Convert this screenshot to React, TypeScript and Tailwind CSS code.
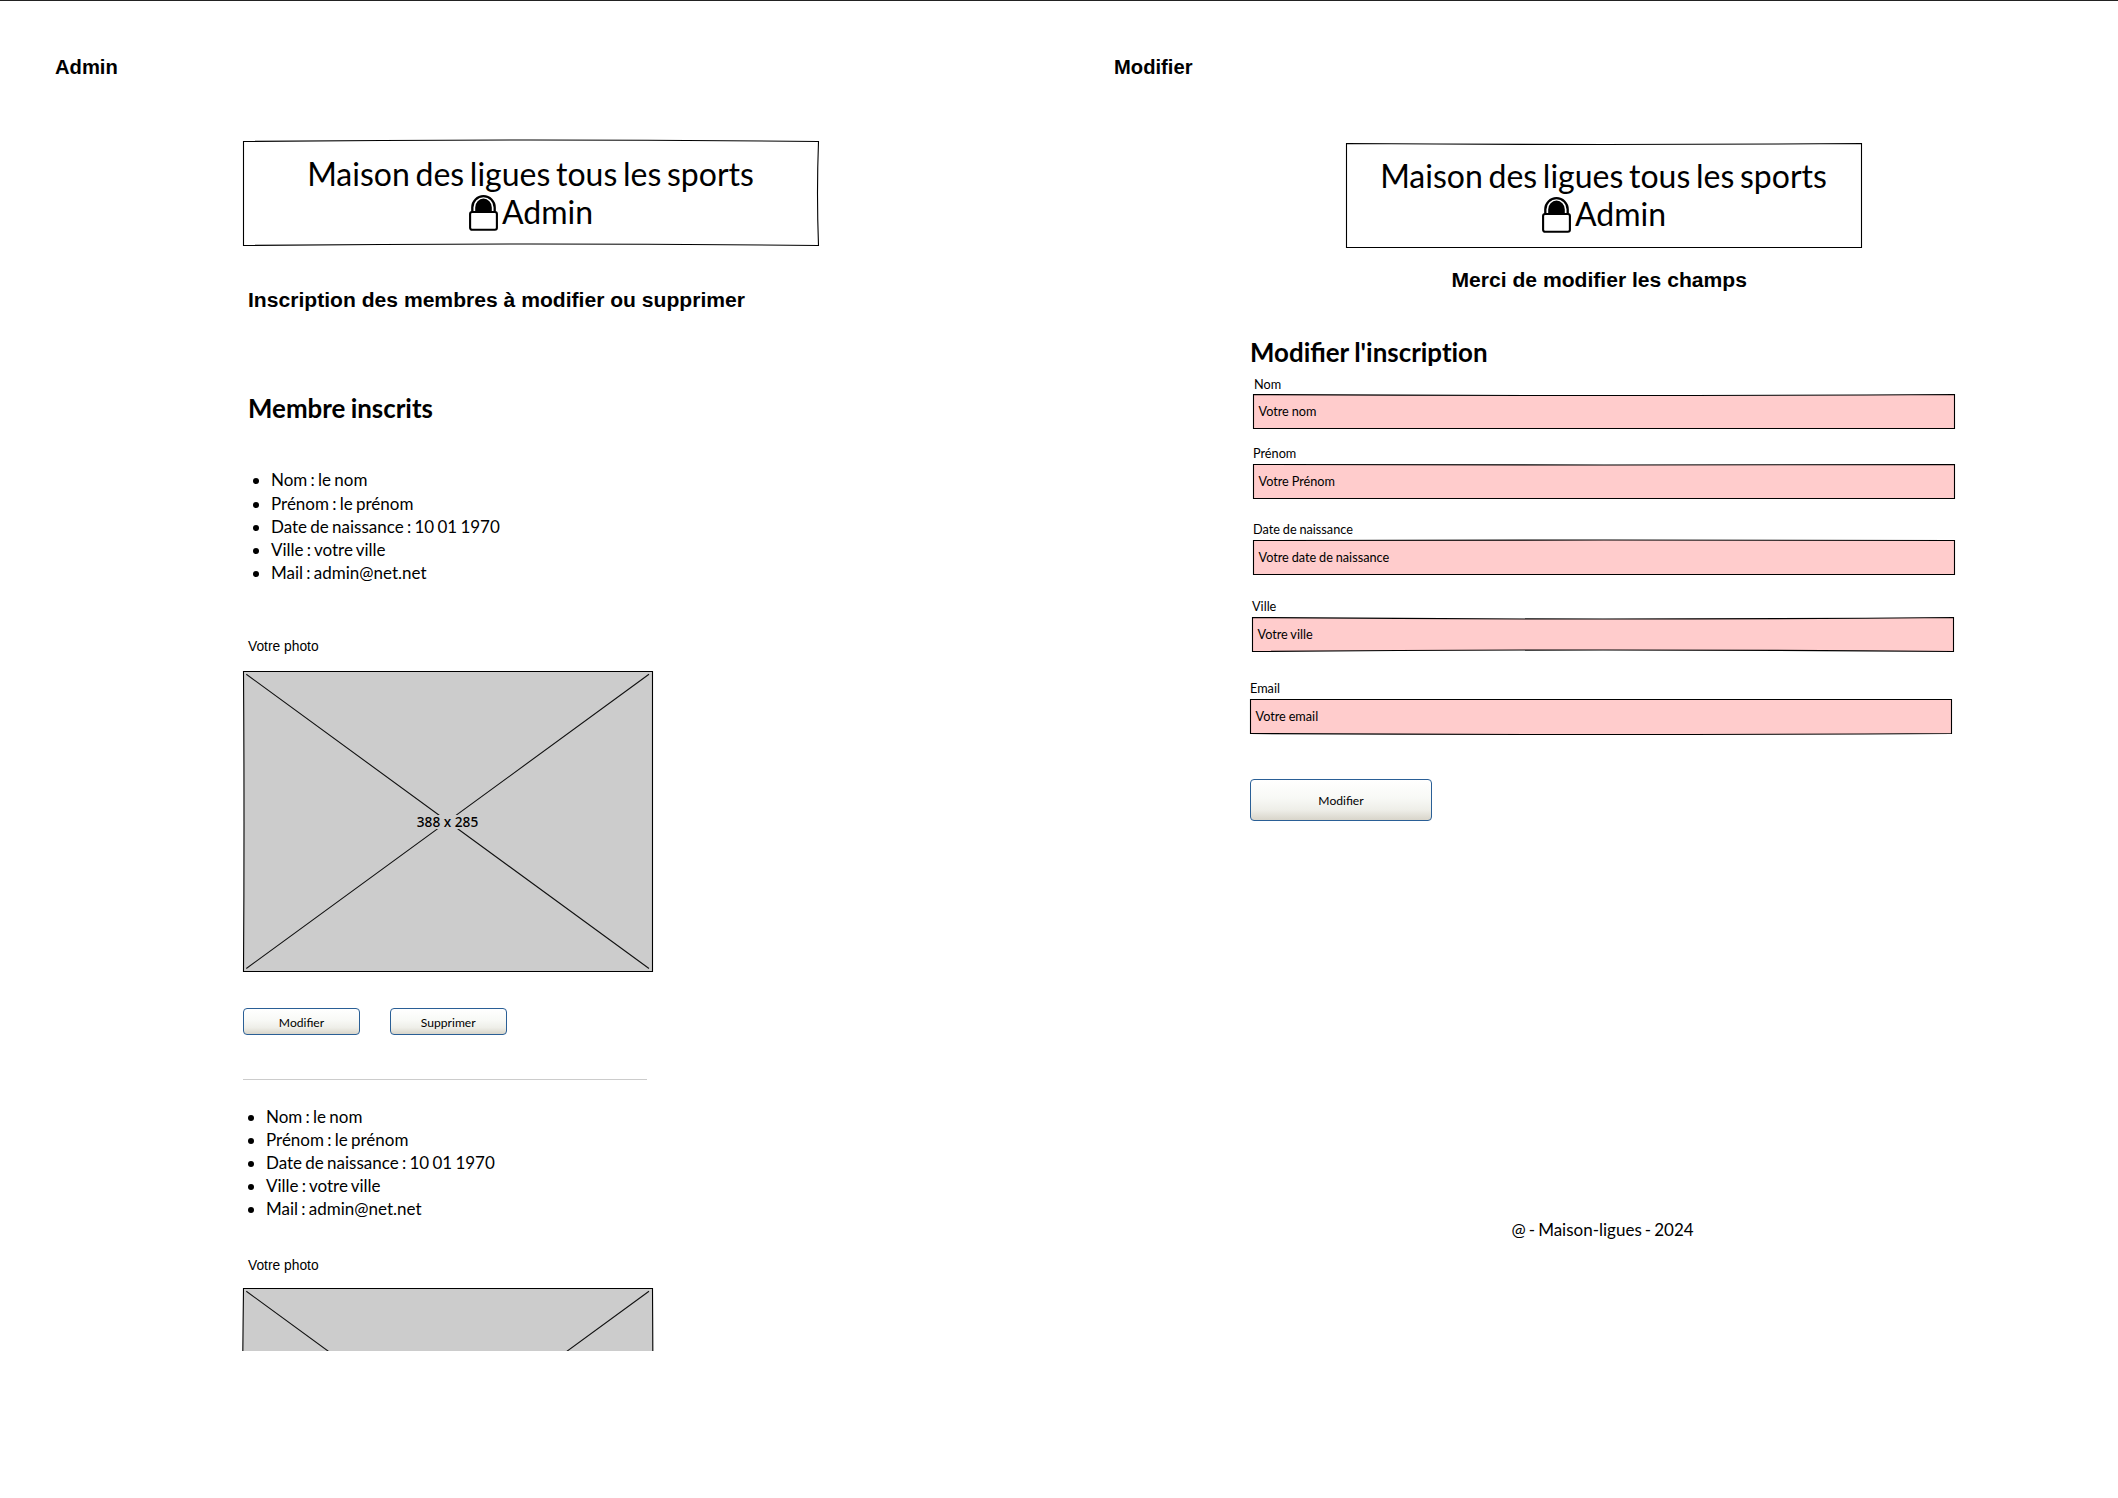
import type { ReactNode } from "react";

/* Rectangle whose edges bow slightly, as if drawn by hand.
   top / right / bottom / left give the bow of each edge in pixels. */
function SketchFrame({
  w,
  h,
  fill = "none",
  top = 0,
  right = 0,
  bottom = 0,
  left = 0,
}: {
  w: number;
  h: number;
  fill?: string;
  top?: number;
  right?: number;
  bottom?: number;
  left?: number;
}) {
  const d = `M.5 .5Q${w / 2} ${0.5 + top} ${w - 0.5} .5Q${w - 0.5 + right} ${h / 2} ${w - 0.5} ${h - 0.5}Q${w / 2} ${h - 0.5 + bottom} .5 ${h - 0.5}Q${0.5 + left} ${h / 2} .5 .5Z`;
  return (
    <svg className="absolute inset-0 overflow-visible" width={w} height={h} aria-hidden="true">
      <path d={d} fill={fill} stroke="#000" strokeWidth="1.1" />
    </svg>
  );
}

function Lock() {
  return (
    <svg className="h-[38px] w-[29px] shrink-0" viewBox="0 0 29 38" aria-hidden="true">
      <path d="M3.3 19V14.4a11.2 11.2 0 0 1 22.4 0V19" fill="none" stroke="#000" strokeWidth="2.3" />
      <path d="M6.2 19V14.4a8.3 8.8 0 0 1 16.6 0V19Z" fill="#000" />
      <rect x="1.1" y="19" width="26.8" height="17.8" rx="2" fill="#fff" stroke="#000" strokeWidth="2.1" />
    </svg>
  );
}

function Banner() {
  return (
    <div className="relative pt-[14px] text-center font-['Lato',sans-serif] text-[32px] leading-[38px] [word-spacing:-2.5px]">
      <div className="-ml-px whitespace-nowrap">Maison des ligues tous les sports</div>
      <div className="flex h-[38px] items-start justify-center gap-[4px]">
        <Lock />
        <span>Admin</span>
      </div>
    </div>
  );
}

function Details({ className }: { className: string }) {
  const rows = [
    "Nom : le nom",
    "Prénom : le prénom",
    "Date de naissance : 10 01 1970",
    "Ville : votre ville",
    "Mail : admin@net.net",
  ];
  return (
    <ul className={"font-['Lato',sans-serif] text-[17px] leading-[23px] [word-spacing:-1.1px] " + className}>
      {rows.map((row) => (
        <li key={row} className="flex items-center whitespace-nowrap">
          <span className="mt-[2px] mr-[12px] ml-[5px] size-[6px] rounded-full bg-black" />
          {row}
        </li>
      ))}
    </ul>
  );
}

function Photo({ className, size, bow }: { className: string; size?: string; bow: number }) {
  return (
    <div className={"relative flex h-[301px] w-[410px] items-center justify-center " + className}>
      <SketchFrame w={410} h={301} fill="#ccc" left={bow} right={bow < 0 ? 1 : 0} />
      <svg className="absolute inset-0" width="410" height="301" aria-hidden="true">
        <path d="M3.3 3.3L406 297.5M406 3.3L3.3 297.5" stroke="#111" strokeWidth="1.1" />
      </svg>
      {size && (
        <span className="relative -ml-px bg-[#ccc] font-['Noto_Sans',sans-serif] text-[13.7px] leading-[14px] font-medium whitespace-nowrap">
          {size}
        </span>
      )}
    </div>
  );
}

function Button({ children, className }: { children: ReactNode; className: string }) {
  return (
    <button
      type="button"
      className={
        "flex items-center justify-center rounded-[4px] border border-[#2a5f96] bg-[linear-gradient(to_bottom,#fff_0%,#f8f9f6_45%,#eeeee8_75%,#d8d5ca_100%)] pt-[2px] font-['Lato',sans-serif] text-[12.1px] leading-[16px] " +
        className
      }
    >
      {children}
    </button>
  );
}

type Bow = { top?: number; right?: number; bottom?: number; left?: number };

function Field({
  label,
  hint,
  className,
  labelClass,
  bow,
}: {
  label: string;
  hint: string;
  className: string;
  labelClass: string;
  bow: Bow;
}) {
  return (
    <label className={"flex w-[702px] flex-col font-['Lato',sans-serif] text-[12.7px] [word-spacing:-0.4px] " + className}>
      <span className={"leading-[16px] " + labelClass}>{label}</span>
      <span className="relative flex h-[35px] items-start pt-[9px]">
        <SketchFrame w={702} h={35} fill="#fcc" {...bow} />
        <span className="relative pl-[5.5px] leading-[16px]">{hint}</span>
      </span>
    </label>
  );
}

export default function App() {
  return (
    <div className="flex h-[1498px] w-[2118px] overflow-hidden border-t border-[#222] bg-white font-['Liberation_Sans',sans-serif] text-black">
      <section className="flex h-[1350px] w-[1059px] flex-col overflow-hidden [&>*]:shrink-0">
        <h1 className="mt-[54px] ml-[55px] text-[20.2px] leading-[24px] font-bold">Admin</h1>
        <header className="relative mt-[62px] ml-[243px] h-[105px] w-[576px]">
          <SketchFrame w={576} h={105} top={-3} bottom={-3} right={-2} />
          <Banner />
        </header>
        <h2 className="mt-[42px] ml-[248px] text-[21.1px] leading-[24px] font-bold whitespace-nowrap">
          Inscription des membres à modifier ou supprimer
        </h2>
        <h3 className="mt-[81px] ml-[248px] font-['Lato',sans-serif] text-[25.9px] leading-[30px] font-bold [word-spacing:-1px]">
          Membre inscrits
        </h3>
        <Details className="mt-[45px] ml-[248px] [&>li:first-child]:mb-px" />
        <p className="mt-[54px] ml-[248px] text-[13.8px] leading-[18px]">Votre photo</p>
        <Photo className="mt-[15px] ml-[243px]" size="388 x 285" bow={1} />
        <div className="mt-[36px] ml-[243px] flex gap-[29.5px]">
          <Button className="h-[27px] w-[117px]">Modifier</Button>
          <Button className="h-[27px] w-[117.5px]">Supprimer</Button>
        </div>
        <hr className="mt-[44px] ml-[243px] w-[404px] border-[#ccc]" />
        <Details className="mt-[25px] ml-[243px]" />
        <p className="mt-[37px] ml-[248px] text-[13.8px] leading-[18px]">Votre photo</p>
        <Photo className="mt-[13px] ml-[243px]" bow={-2} />
      </section>
      <section className="flex w-[1059px] flex-col [&>*]:shrink-0">
        <h1 className="mt-[54px] ml-[55px] text-[20.2px] leading-[24px] font-bold">Modifier</h1>
        <header className="relative mt-[64px] ml-[287px] h-[105px] w-[516px]">
          <SketchFrame w={516} h={105} top={2} />
          <Banner />
        </header>
        <h2 className="mt-[20px] ml-[392.5px] text-[21.1px] leading-[24px] font-bold whitespace-nowrap">
          Merci de modifier les champs
        </h2>
        <h3 className="mt-[45px] ml-[191px] font-['Lato',sans-serif] text-[25.9px] leading-[30px] font-bold [word-spacing:-0.8px]">
          Modifier <span className="[font-variant-ligatures:none]">l'inscription</span>
        </h3>
        <Field label="Nom" hint="Votre nom" className="mt-[9px] ml-[194px]" labelClass="mb-[2px] pl-[1px]" bow={{ top: 2 }} />
        <Field label="Prénom" hint="Votre Prénom" className="mt-[16px] ml-[194px]" labelClass="mb-[3px]" bow={{ top: 1 }} />
        <Field label="Date de naissance" hint="Votre date de naissance" className="mt-[22px] ml-[194px]" labelClass="mb-[3px]" bow={{ top: -1 }} />
        <Field label="Ville" hint="Votre ville" className="mt-[23px] ml-[193px]" labelClass="mb-[3px]" bow={{ top: 3, bottom: -3 }} />
        <Field label="Email" hint="Votre email" className="mt-[28px] ml-[191px]" labelClass="mb-[3px]" bow={{ bottom: 2 }} />
        <Button className="mt-[45px] ml-[191px] h-[42px] w-[182px]">Modifier</Button>
        <footer className="mt-[397px] ml-[452.5px] font-['Lato',sans-serif] text-[17px] leading-[23px] [word-spacing:-1.3px]">
          @ - Maison-ligues - 2024
        </footer>
      </section>
    </div>
  );
}
